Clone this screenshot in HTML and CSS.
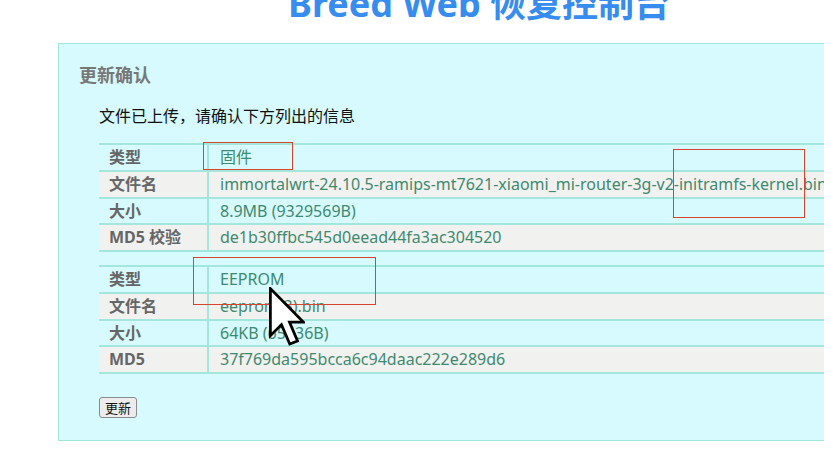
FILE: index.html
```html
<!DOCTYPE html>
<html lang="zh-CN">
<head>
<meta charset="utf-8">
<title>Breed Web 恢复控制台</title>
<link rel="stylesheet" href="styles.css">
</head>
<body>
<header class="top">
  <h1 class="title">Breed Web 恢复控制台</h1>
</header>
<section class="panel">
  <h2 class="panel-title">更新确认</h2>
  <div class="panel-body">
    <p class="msg">文件已上传，请确认下方列出的信息</p>
    <div class="info">
      <div class="row"><div class="k">类型</div><div class="v">固件</div></div>
      <div class="row alt"><div class="k">文件名</div><div class="v">immortalwrt-24.10.5-ramips-mt7621-xiaomi_mi-router-3g-v2-initramfs-kernel.bin</div></div>
      <div class="row"><div class="k">大小</div><div class="v">8.9MB (9329569B)</div></div>
      <div class="row alt"><div class="k">MD5 校验</div><div class="v">de1b30ffbc545d0eead44fa3ac304520</div></div>
    </div>
    <div class="info second">
      <div class="row"><div class="k">类型</div><div class="v">EEPROM</div></div>
      <div class="row alt"><div class="k">文件名</div><div class="v">eeprom(3).bin</div></div>
      <div class="row"><div class="k">大小</div><div class="v">64KB (65536B)</div></div>
      <div class="row alt"><div class="k">MD5</div><div class="v">37f769da595bcca6c94daac222e289d6</div></div>
    </div>
    <button class="btn" type="button">更新</button>
  </div>
</section>
<div class="mark mark-1"></div>
<div class="mark mark-2"></div>
<div class="mark mark-3"></div>
<svg class="cursor" viewBox="0 0 13 21.5" width="36" height="60" aria-hidden="true">
  <polygon points="0.5,0.5 0.5,17.5 4.5,13.5 7.5,20.5 10.3,19.4 7.4,12.6 12.4,12.6" fill="#fff" stroke="#000" stroke-width="1" stroke-linejoin="miter"/>
</svg>
</body>
</html>
```
FILE: styles.css
```css
html {
  overflow: hidden;
}
body {
  margin: 0;
  background: #fff;
  position: relative;
  width: 824px;
  height: 449px;
  font-family: "Noto Sans", "Noto Sans CJK SC", sans-serif;
}
.top {
  display: flow-root;
  height: 43px;
  padding-left: 288px;
}
.title {
  margin: -14px 0 0;
  font-size: 36px;
  line-height: 36px;
  font-weight: 700;
  color: #378cf0;
  white-space: nowrap;
}
.panel {
  margin-left: 58px;
  width: 1000px;
  border: 1px solid #a0e6dc;
  background: #d6fafd;
  padding: 20px 0 22px 20px;
}
.panel-title {
  margin: 0;
  font-size: 18px;
  line-height: 22px;
  font-weight: 700;
  color: #777;
}
.panel-body {
  padding-left: 20px;
}
.msg {
  margin: 19px 0 16px;
  font-size: 16px;
  line-height: 22px;
  color: #111;
}
.info {
  width: 900px;
  border-top: 2px solid #a3e7dc;
}
.info.second {
  margin-top: 13px;
}
.row {
  display: grid;
  grid-template-columns: 110px 1fr;
  border-bottom: 2px solid #a3e7dc;
  height: 24.75px;
}
.row.alt {
  background: #f1f1f0;
}
.k {
  border-right: 2px solid #a3e7dc;
  padding-left: 10px;
  font-size: 16px;
  line-height: 25px;
  font-weight: 700;
  color: #666;
  white-space: nowrap;
}
.v {
  padding-left: 11px;
  font-size: 16px;
  line-height: 25px;
  color: #3e8a6f;
  white-space: nowrap;
}
.btn {
  margin-top: 23px;
  display: block;
  height: 21px;
  padding: 0 5px;
  font-family: "Noto Sans CJK SC", sans-serif;
  font-size: 13px;
  line-height: 19px;
  color: #111;
  background: #ececec;
  border: 1px solid #8a8a8a;
  border-radius: 3px;
}
.mark {
  position: absolute;
  border: 1px solid #d8452f;
}
.mark-1 {
  left: 203px;
  top: 142px;
  width: 88px;
  height: 26px;
}
.mark-2 {
  left: 673px;
  top: 149px;
  width: 130px;
  height: 67px;
}
.mark-3 {
  left: 193px;
  top: 257px;
  width: 181px;
  height: 46px;
}
.cursor {
  position: absolute;
  left: 269px;
  top: 287px;
}
```
